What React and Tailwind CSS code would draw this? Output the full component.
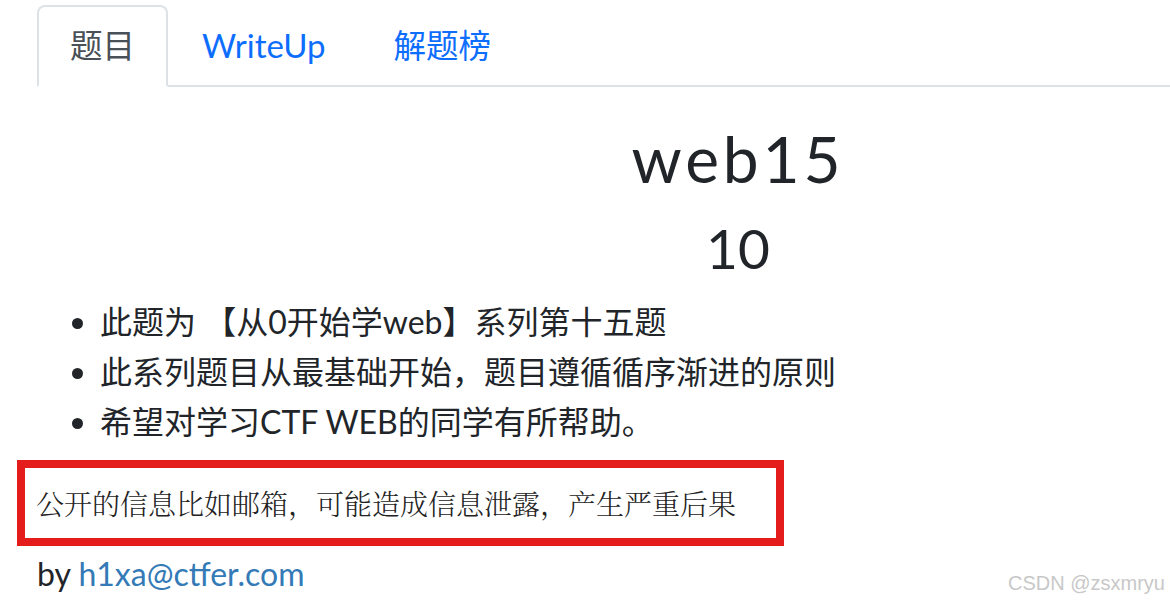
import React from "react";

export default function App() {
  return (
    <div className="w-[1170px] h-[608px] overflow-hidden bg-white relative text-[#212529] font-['Lato','Noto_Sans_CJK_SC',sans-serif]">
      {/* Tabs */}
      <div className="pt-[5px] ml-[37px] flex border-b-2 border-[#dee2e6]">
        <div className="-mb-[2px] h-[82px] px-[31px] flex items-center border-2 border-[#dee2e6] border-b-white rounded-t-[8px] bg-white text-[#495057] text-[32.5px]">
          题目
        </div>
        <div className="-mb-[2px] h-[82px] px-[32px] flex items-center border-2 border-transparent text-[#0d6efd] text-[33px]">
          WriteUp
        </div>
        <div className="-mb-[2px] h-[82px] px-[32px] flex items-center border-2 border-transparent text-[#0d6efd] text-[32.5px]">
          解题榜
        </div>
      </div>

      {/* Title */}
      <div className="pl-[306px] text-center">
        <div className="mt-[34px] text-[64px] leading-[76px] tracking-[0.06em] text-[#212529]">
          web15
        </div>
        <div className="mt-[19px] text-[55px] leading-[64px] text-[#212529]">10</div>
      </div>

      {/* List */}
      <ul className="mt-[17px] ml-[37px] pl-[63px] list-disc text-[32px] leading-[50px] text-[#212529]">
        <li>此题为 【从0开始学web】系列第十五题</li>
        <li>此系列题目从最基础开始，题目遵循循序渐进的原则</li>
        <li>希望对学习CTF WEB的同学有所帮助。</li>
      </ul>

      {/* Red box */}
      <div className="mt-[13px] ml-[17px] w-[767px] h-[86px] border-[8px] border-[#e41c1c] flex items-center pl-[11px]">
        <span className="text-[28px] font-light text-[#222] font-['Noto_Serif_CJK_SC','Liberation_Serif','Noto_Sans_CJK_SC',serif]">
          公开的信息比如邮箱，可能造成信息泄露，产生严重后果
        </span>
      </div>

      {/* by */}
      <div className="ml-[37px] mt-[6px] text-[32px] leading-[44px] text-[#212529]">
        by <span className="text-[#337ab7]">h1xa@ctfer.com</span>
      </div>

      {/* watermark */}
      <div className="absolute right-[5px] bottom-[10px] text-[20px] text-[#c8c8c8] font-['Liberation_Sans',sans-serif]">
        CSDN @zsxmryu
      </div>
    </div>
  );
}
